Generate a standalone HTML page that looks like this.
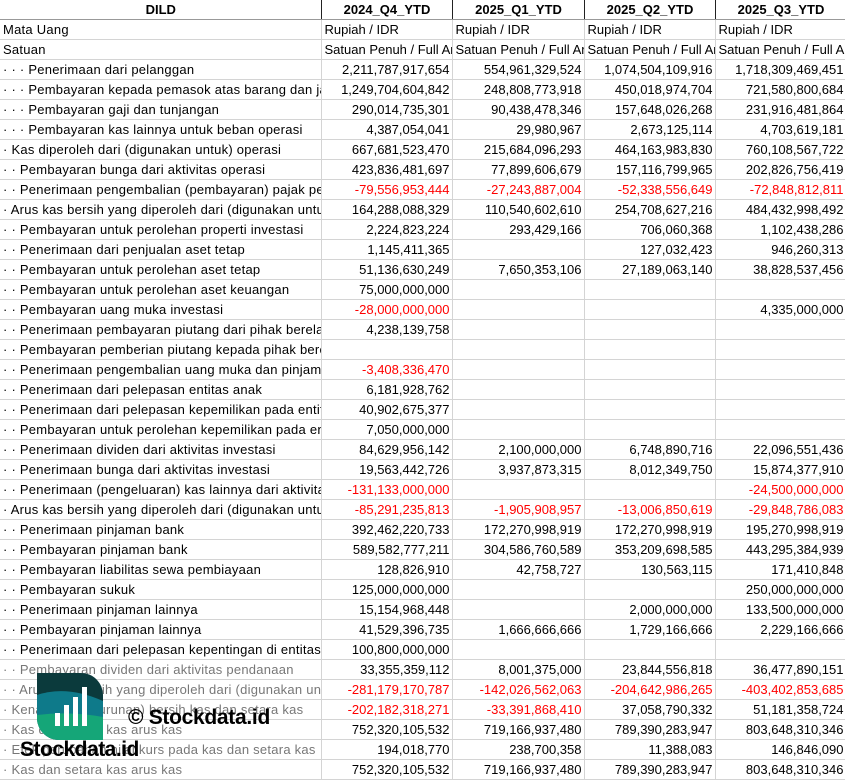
<!DOCTYPE html>
<html><head><meta charset="utf-8"><style>
body{margin:0;background:#fff;width:845px;height:781px;overflow:hidden;position:relative;font-family:"Liberation Sans",sans-serif;font-size:13px;color:#000}
table{border-collapse:collapse;table-layout:fixed;width:846px;position:absolute;left:0;top:0}
td{height:19px;padding:0 2px 0 3px;border-right:1px solid #d4d4d4;border-bottom:1px solid #d4d4d4;white-space:nowrap;overflow:hidden;line-height:19px}
td:first-child{letter-spacing:0.25px}
tr.h td{font-weight:bold;text-align:center;border-right:1px solid #222;border-bottom:1px solid #999;letter-spacing:0}
td.n{text-align:right}
.r{color:#f00}
.wm{position:absolute}
</style></head><body>
<table>
<colgroup><col style="width:321px"><col style="width:131px"><col style="width:132px"><col style="width:131px"><col style="width:131px"></colgroup>
<tr class="h"><td>DILD</td><td>2024_Q4_YTD</td><td>2025_Q1_YTD</td><td>2025_Q2_YTD</td><td>2025_Q3_YTD</td></tr>
<tr><td>Mata Uang</td><td>Rupiah / IDR</td><td>Rupiah / IDR</td><td>Rupiah / IDR</td><td>Rupiah / IDR</td></tr>
<tr><td>Satuan</td><td>Satuan Penuh / Full Amount</td><td>Satuan Penuh / Full Amount</td><td>Satuan Penuh / Full Amount</td><td>Satuan Penuh / Full Amount</td></tr>
<tr><td>· · · Penerimaan dari pelanggan</td><td class="n">2,211,787,917,654</td><td class="n">554,961,329,524</td><td class="n">1,074,504,109,916</td><td class="n">1,718,309,469,451</td></tr>
<tr><td>· · · Pembayaran kepada pemasok atas barang dan jasa</td><td class="n">1,249,704,604,842</td><td class="n">248,808,773,918</td><td class="n">450,018,974,704</td><td class="n">721,580,800,684</td></tr>
<tr><td>· · · Pembayaran gaji dan tunjangan</td><td class="n">290,014,735,301</td><td class="n">90,438,478,346</td><td class="n">157,648,026,268</td><td class="n">231,916,481,864</td></tr>
<tr><td>· · · Pembayaran kas lainnya untuk beban operasi</td><td class="n">4,387,054,041</td><td class="n">29,980,967</td><td class="n">2,673,125,114</td><td class="n">4,703,619,181</td></tr>
<tr><td>· Kas diperoleh dari (digunakan untuk) operasi</td><td class="n">667,681,523,470</td><td class="n">215,684,096,293</td><td class="n">464,163,983,830</td><td class="n">760,108,567,722</td></tr>
<tr><td>· · Pembayaran bunga dari aktivitas operasi</td><td class="n">423,836,481,697</td><td class="n">77,899,606,679</td><td class="n">157,116,799,965</td><td class="n">202,826,756,419</td></tr>
<tr><td>· · Penerimaan pengembalian (pembayaran) pajak penghasilan</td><td class="n r">-79,556,953,444</td><td class="n r">-27,243,887,004</td><td class="n r">-52,338,556,649</td><td class="n r">-72,848,812,811</td></tr>
<tr><td>· Arus kas bersih yang diperoleh dari (digunakan untuk)</td><td class="n">164,288,088,329</td><td class="n">110,540,602,610</td><td class="n">254,708,627,216</td><td class="n">484,432,998,492</td></tr>
<tr><td>· · Pembayaran untuk perolehan properti investasi</td><td class="n">2,224,823,224</td><td class="n">293,429,166</td><td class="n">706,060,368</td><td class="n">1,102,438,286</td></tr>
<tr><td>· · Penerimaan dari penjualan aset tetap</td><td class="n">1,145,411,365</td><td></td><td class="n">127,032,423</td><td class="n">946,260,313</td></tr>
<tr><td>· · Pembayaran untuk perolehan aset tetap</td><td class="n">51,136,630,249</td><td class="n">7,650,353,106</td><td class="n">27,189,063,140</td><td class="n">38,828,537,456</td></tr>
<tr><td>· · Pembayaran untuk perolehan aset keuangan</td><td class="n">75,000,000,000</td><td></td><td></td><td></td></tr>
<tr><td>· · Pembayaran uang muka investasi</td><td class="n r">-28,000,000,000</td><td></td><td></td><td class="n">4,335,000,000</td></tr>
<tr><td>· · Penerimaan pembayaran piutang dari pihak berelasi</td><td class="n">4,238,139,758</td><td></td><td></td><td></td></tr>
<tr><td>· · Pembayaran pemberian piutang kepada pihak berelasi</td><td></td><td></td><td></td><td></td></tr>
<tr><td>· · Penerimaan pengembalian uang muka dan pinjaman</td><td class="n r">-3,408,336,470</td><td></td><td></td><td></td></tr>
<tr><td>· · Penerimaan dari pelepasan entitas anak</td><td class="n">6,181,928,762</td><td></td><td></td><td></td></tr>
<tr><td>· · Penerimaan dari pelepasan kepemilikan pada entitas</td><td class="n">40,902,675,377</td><td></td><td></td><td></td></tr>
<tr><td>· · Pembayaran untuk perolehan kepemilikan pada entitas</td><td class="n">7,050,000,000</td><td></td><td></td><td></td></tr>
<tr><td>· · Penerimaan dividen dari aktivitas investasi</td><td class="n">84,629,956,142</td><td class="n">2,100,000,000</td><td class="n">6,748,890,716</td><td class="n">22,096,551,436</td></tr>
<tr><td>· · Penerimaan bunga dari aktivitas investasi</td><td class="n">19,563,442,726</td><td class="n">3,937,873,315</td><td class="n">8,012,349,750</td><td class="n">15,874,377,910</td></tr>
<tr><td>· · Penerimaan (pengeluaran) kas lainnya dari aktivitas</td><td class="n r">-131,133,000,000</td><td></td><td></td><td class="n r">-24,500,000,000</td></tr>
<tr><td>· Arus kas bersih yang diperoleh dari (digunakan untuk)</td><td class="n r">-85,291,235,813</td><td class="n r">-1,905,908,957</td><td class="n r">-13,006,850,619</td><td class="n r">-29,848,786,083</td></tr>
<tr><td>· · Penerimaan pinjaman bank</td><td class="n">392,462,220,733</td><td class="n">172,270,998,919</td><td class="n">172,270,998,919</td><td class="n">195,270,998,919</td></tr>
<tr><td>· · Pembayaran pinjaman bank</td><td class="n">589,582,777,211</td><td class="n">304,586,760,589</td><td class="n">353,209,698,585</td><td class="n">443,295,384,939</td></tr>
<tr><td>· · Pembayaran liabilitas sewa pembiayaan</td><td class="n">128,826,910</td><td class="n">42,758,727</td><td class="n">130,563,115</td><td class="n">171,410,848</td></tr>
<tr><td>· · Pembayaran sukuk</td><td class="n">125,000,000,000</td><td></td><td></td><td class="n">250,000,000,000</td></tr>
<tr><td>· · Penerimaan pinjaman lainnya</td><td class="n">15,154,968,448</td><td></td><td class="n">2,000,000,000</td><td class="n">133,500,000,000</td></tr>
<tr><td>· · Pembayaran pinjaman lainnya</td><td class="n">41,529,396,735</td><td class="n">1,666,666,666</td><td class="n">1,729,166,666</td><td class="n">2,229,166,666</td></tr>
<tr><td>· · Penerimaan dari pelepasan kepentingan di entitas</td><td class="n">100,800,000,000</td><td></td><td></td><td></td></tr>
<tr><td style="color:#777">· · Pembayaran dividen dari aktivitas pendanaan</td><td class="n">33,355,359,112</td><td class="n">8,001,375,000</td><td class="n">23,844,556,818</td><td class="n">36,477,890,151</td></tr>
<tr><td style="color:#777">· · Arus kas bersih yang diperoleh dari (digunakan untuk)</td><td class="n r">-281,179,170,787</td><td class="n r">-142,026,562,063</td><td class="n r">-204,642,986,265</td><td class="n r">-403,402,853,685</td></tr>
<tr><td style="color:#777">· Kenaikan (penurunan) bersih kas dan setara kas</td><td class="n r">-202,182,318,271</td><td class="n r">-33,391,868,410</td><td class="n">37,058,790,332</td><td class="n">51,181,358,724</td></tr>
<tr><td style="color:#777">· Kas dan setara kas arus kas</td><td class="n">752,320,105,532</td><td class="n">719,166,937,480</td><td class="n">789,390,283,947</td><td class="n">803,648,310,346</td></tr>
<tr><td style="color:#777">· Efek perubahan nilai kurs pada kas dan setara kas</td><td class="n">194,018,770</td><td class="n">238,700,358</td><td class="n">11,388,083</td><td class="n">146,846,090</td></tr>
<tr><td style="color:#777">· Kas dan setara kas arus kas</td><td class="n">752,320,105,532</td><td class="n">719,166,937,480</td><td class="n">789,390,283,947</td><td class="n">803,648,310,346</td></tr>
</table>
<svg class="wm" style="left:37px;top:673px" width="66" height="67" viewBox="0 0 66 67">
<defs><clipPath id="c"><path d="M0 0H44A22 22 0 0 1 66 22V67H22A22 22 0 0 1 0 45Z"/></clipPath></defs>
<g clip-path="url(#c)">
<rect x="0" y="0" width="66" height="67" fill="#0b3a3c"/>
<path d="M0 22Q30 12 66 28V67H0Z" fill="#0e7a8a"/>
<path d="M0 42Q33 38 66 44V67H0Z" fill="#15a678"/>
</g>
<rect x="18" y="40" width="5" height="13" fill="#fff"/>
<rect x="27" y="32" width="5" height="21" fill="#fff"/>
<rect x="36" y="24" width="5" height="29" fill="#fff"/>
<rect x="45" y="14" width="5" height="39" fill="#fff"/>
</svg>
<div class="wm" style="left:20px;top:738px;font-size:21px;font-weight:bold;letter-spacing:-0.5px">Stockdata.id</div>
<div class="wm" style="left:128px;top:706px;font-size:21px;font-weight:bold;letter-spacing:-0.3px">© Stockdata.id</div>
</body></html>
